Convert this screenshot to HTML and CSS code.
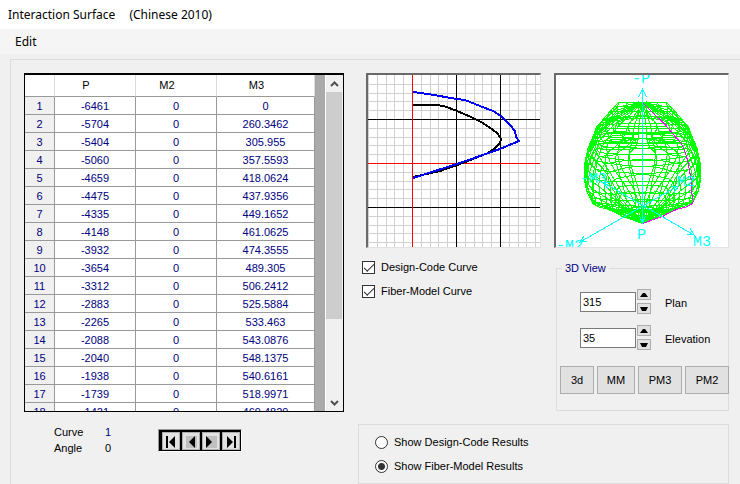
FILE: index.html
```html
<!DOCTYPE html>
<html lang="en">
<head>
<meta charset="utf-8">
<title>Interaction Surface (Chinese 2010)</title>
<link rel="stylesheet" href="styles.css">
</head>
<body>
<header class="titlebar"><span>Interaction Surface</span><span>(Chinese 2010)</span></header>
<nav class="menubar"><button type="button" class="menu-item">Edit</button></nav>
<main class="panel">
  <section class="left">
    <div class="sheet">
      <div class="sheet-view">
        <table class="points">
          <thead><tr><th class="num"></th><th class="axial">P</th><th class="axial">M2</th><th>M3</th></tr></thead>
          <tbody id="rows"></tbody>
        </table>
      </div>
      <div class="scrollbar">
        <button type="button" class="scroll-btn" aria-label="Scroll up"><svg width="9" height="6" viewBox="0 0 9 6"><path d="M1 5 4.500 1.500 8 5" fill="none" stroke="#505050" stroke-width="2"/></svg></button>
        <div class="track"><div class="thumb"></div></div>
        <button type="button" class="scroll-btn" aria-label="Scroll down"><svg width="9" height="6" viewBox="0 0 9 6"><path d="M1 1 4.500 4.500 8 1" fill="none" stroke="#505050" stroke-width="2"/></svg></button>
      </div>
    </div>
    <div class="curve-row">
      <dl class="curve-info"><dt>Curve</dt><dd>1</dd><dt>Angle</dt><dd>0</dd></dl>
      <div class="player">
        <button type="button" aria-label="First curve"><svg width="15" height="15" viewBox="0 0 15 15"><path d="M2 2h2v12H2zM11 2v12L5 8z"/></svg></button>
        <button type="button" aria-label="Previous curve"><svg width="15" height="15" viewBox="0 0 15 15"><path fill="#c0c0c0" d="M2 2h11v12H2z"/><path d="M11 2v12L5 8z"/></svg></button>
        <button type="button" aria-label="Next curve"><svg width="15" height="15" viewBox="0 0 15 15"><path fill="#c0c0c0" d="M2 2h11v12H2z"/><path d="M2 2v12L8 8z"/></svg></button>
        <button type="button" aria-label="Last curve"><svg width="15" height="15" viewBox="0 0 15 15"><path d="M10 2h2v12h-2zM3 2v12L9 8z"/></svg></button>
      </div>
    </div>
  </section>
  <section class="right">
    <div class="views">
      <div class="plot-col">
        <svg class="plot" viewBox="0 0 172 172" id="plot" role="img" aria-label="P-M curve"></svg>
        <div class="checks">
          <label><input type="checkbox" checked>Design-Code Curve</label>
          <label><input type="checkbox" checked>Fiber-Model Curve</label>
        </div>
      </div>
      <div class="view-col">
        <svg class="plot" viewBox="0 0 172 172" id="surface" role="img" aria-label="Interaction surface"></svg>
        <fieldset class="view3d">
          <legend>3D View</legend>
          <div class="angle">
            <input id="plan" type="text" value="315">
            <div class="spin">
              <button type="button" aria-label="Increase plan"><svg width="8" height="4" viewBox="0 0 8 4"><path d="M0 4 3 0h2l3 4z"/></svg></button>
              <button type="button" aria-label="Decrease plan"><svg width="8" height="4" viewBox="0 0 8 4"><path d="M0 0 2 4h4l2-4z"/></svg></button>
            </div>
            <label for="plan">Plan</label>
          </div>
          <div class="angle">
            <input id="elevation" type="text" value="35">
            <div class="spin">
              <button type="button" aria-label="Increase elevation"><svg width="8" height="4" viewBox="0 0 8 4"><path d="M0 4 3 0h2l3 4z"/></svg></button>
              <button type="button" aria-label="Decrease elevation"><svg width="8" height="4" viewBox="0 0 8 4"><path d="M0 0 2 4h4l2-4z"/></svg></button>
            </div>
            <label for="elevation">Elevation</label>
          </div>
          <div class="presets">
            <button type="button">3d</button><button type="button">MM</button><button type="button">PM3</button><button type="button">PM2</button>
          </div>
        </fieldset>
      </div>
    </div>
    <div class="results">
      <label><input type="radio" name="results">Show Design-Code Results</label>
      <label><input type="radio" name="results" checked>Show Fiber-Model Results</label>
    </div>
  </section>
</main>
<script src="surface.js"></script>
</body>
</html>
```
FILE: styles.css
```css
* { box-sizing: border-box; }
body {
  margin: 0;
  min-height: 100vh;
  display: flex;
  flex-direction: column;
  overflow: hidden;
  background: #f0f0f0;
  color: #000;
  font: 11px/16px "Liberation Sans", Arial, sans-serif;
}
button, input { font: inherit; color: inherit; margin: 0; }
button { padding: 0; border: 0; background: none; display: flex; align-items: center; justify-content: center; }
svg { display: block; }

.titlebar, .menu-item { font: 12px/24px "Noto Sans", "Open Sans", sans-serif; }
.titlebar { display: flex; gap: 14px; background: #fff; padding: 3px 8px 2px; }
.menubar { display: flex; background: #f5f5f5; padding: 1px 15px 0; }

.panel {
  flex: 1;
  display: flex;
  gap: 14px;
  margin: 5px 0 0 10px;
  padding: 13px 0 0 13px;
  border: solid #dcdcdc;
  border-width: 1px 0 0 1px;
}
.left { width: 320px; flex: none; }
.sheet { display: flex; height: 339px; border: 1px solid #000; border-top-width: 2px; }
.sheet-view { flex: 1; overflow: hidden; background: #aaa; }
.points { table-layout: fixed; width: 290px; border-collapse: separate; border-spacing: 0; text-align: center; color: navy; background: #fff; }
.points th, .points td { padding: 2px 0 0; border: solid #999; border-width: 0 1px 1px 0; height: 18px; line-height: 15px; font-weight: normal; }
.points thead th { height: 22px; padding: 0 18px 0 0; border-right-color: #dcdcdc; color: #000; }
.points .num { width: 30px; }
.points .axial { width: 81px; }
.points tbody .num { background: #f0f0f0; }
.scrollbar { width: 18px; display: flex; flex-direction: column; background: #f0f0f0; border-left: 1px solid #fff; }
.scroll-btn { height: 17px; }
.track { flex: 1; padding: 0 1px 0 0; }
.thumb { height: 75%; background: #cdcdcd; }

.curve-row { display: flex; align-items: flex-start; justify-content: space-between; margin-top: 12px; padding: 0 102px 0 30px; }
.curve-info { display: grid; grid-template-columns: 48px 12px; margin: 0; }
.curve-info dd { margin: 0; text-align: center; color: navy; }
.curve-info dd:last-child { color: #000; }
.player { display: flex; gap: 2px; margin-top: 5px; padding: 2px 1px 1px 3px; background: #000; border: 1px solid; border-color: #999 #fff #fff #999; }
.player button { width: 18px; height: 18px; background: #e1e1e1; border: 1px solid #adadad; }

.right { flex: 1; min-width: 0; }
.views { display: flex; gap: 13px; padding-left: 8px; }
.plot-col, .view-col { width: 175px; flex: none; }
.plot { width: 175px; height: 175px; background: #fff; border: solid; border-width: 2px 1px 1px 2px; border-color: #696969 #e3e3e3 #e3e3e3 #696969; }
.checks { margin: 11px 0 0 -4px; display: grid; gap: 8px; }
.checks label, .results label { display: flex; align-items: center; gap: 6px; }
input[type="checkbox"], input[type="radio"] { appearance: none; width: 13px; height: 13px; border: 1px solid #333; background: #fff; flex: none; }
input[type="checkbox"]::before { content: ""; display: block; width: 9px; height: 4px; margin: 2px 1px; border: solid #333; border-width: 0 0 1px 1px; transform: rotate(-45deg); }
input[type="radio"] { border-radius: 50%; }
input[type="radio"]:checked { background: radial-gradient(circle, #333 3px, #fff 4px); }

.view3d { margin: 12px 0 0 2px; padding: 4px 1px 16px 3px; border: 1px solid #dcdcdc; min-width: 0; }
.view3d legend { margin-left: 2px; padding: 0 3px; color: navy; }
.angle { display: flex; align-items: center; margin: 9px 0 11px 20px; }
.angle input { width: 56px; height: 20px; padding: 0 2px; border: 1px solid #7a7a7a; background: #fff; }
.angle label { flex: 1; padding: 2px 0 0 14px; }
.spin { display: grid; gap: 3px; margin-left: 1px; }
.spin button { width: 14px; height: 11px; background: #e1e1e1; border: 1px solid #adadad; }
.presets { display: grid; grid-template-columns: 34px 38px 44px 44px; gap: 3px; margin-top: 16px; }
.presets button { height: 28px; background: #e1e1e1; border: 1px solid #adadad; }

.results { display: grid; gap: 8px; margin: 13px 11px 0 0; padding: 9px 16px; border: 1px solid #dcdcdc; }
```
FILE: surface.js
```js
const points = [
  [-6461, 0], [-5704, 260.3462], [-5404, 305.955], [-5060, 357.5593], [-4659, 418.0624],
  [-4475, 437.9356], [-4335, 449.1652], [-4148, 461.0625], [-3932, 474.3555], [-3654, 489.305],
  [-3312, 506.2412], [-2883, 525.5884], [-2265, 533.463], [-2088, 543.0876], [-2040, 548.1375],
  [-1938, 540.6161], [-1739, 518.9971], [-1421, 469.4829]
];
document.getElementById("rows").innerHTML = points.map(([p, m], i) =>
  `<tr><th class="num">${i + 1}</th><td>${p}</td><td>0</td><td>${m}</td></tr>`).join("");

// P-M plot: grid lines, axes and both curves
const line = (d, color, width = 1) =>
  `<path d="${d}" fill="none" stroke="${color}" stroke-width="${width}" shape-rendering="crispEdges"/>`;
let minor = "", major = "";
for (let i = -9; i < 20; i++) {
  const s = Math.round(i * 8.8) + 0.5;
  const x = s + 44, y = s + 88;
  minor += `M${x} 0V172M0 ${y}H172`;
  if (i % 5 === 0 && i !== 0) major += (i > 0 ? `M${x} 0V172` : "") + `M0 ${y}H172`;
}
document.getElementById("plot").innerHTML =
  line(minor, "#d0d0d0") + line(major, "#000") + line("M44.5 0V172M0 88.500H172", "#f00") +
  line("M45 30H69L77 31.500 89 36 102 41.500 113 47 124 54 130 59 133 64 132 68 127 73 120 78 105 84 92 89 72 96 45 102", "#000", 2) +
  line("M45 17 60 19 89 24 97 25 112 31 125 36 133 41 142 50 147 56 148 62 151 66 132 74 109 82 89 89 70 95 45 103", "#00f", 2);

// Interaction surface: one profile swept round the P axis
const profile = points.concat([
  [-1150, 410], [-850, 355], [-550, 305], [-250, 255], [0, 222], [300, 165], [600, 110], [900, 55], [1200, 0]
]);
const tilt = i => i < 4 ? 0.95 - i * 0.1 : i < 10 ? 0.55 : Math.min(1, 0.55 + (i - 9) * 0.09);
const project = (p, m, angle, i) => {
  const c = Math.cos(angle), s = Math.sin(angle);
  const e = Math.min(1.25, 1.02 + i * 0.04);
  const r = m / Math.pow(Math.abs(c) ** e + Math.abs(s) ** e, 1 / e);
  const m3 = r * c, m2 = r * s;
  return [86.5 + (m3 + m2) * 0.0925, 129.5 + p * 0.0158 + (m3 - m2) * 0.0536 * tilt(i)];
};
const path = pts => "M" + pts.map(q => q.map(v => v.toFixed(1)).join(" ")).join("L");
const steps = 32, angleAt = k => k * 2 * Math.PI / steps;
const twist = (a, i) => a + 0.12 * Math.sin(4 * a) * Math.sin(i * 0.6);
let mesh = "";
for (let k = 0; k < steps; k++) {
  const a = angleAt(k);
  mesh += path(profile.map(([p, m], i) => project(p, m, twist(a, i), i)));
}
profile.forEach(([p, m], i) => {
  const sway = i > 3 && i < 24 ? 200 : 0;
  mesh += path(Array.from({ length: steps + 1 }, (_, k) => {
    const a = angleAt(k);
    return project(p + sway * Math.sin(2 * a) ** 2 * Math.sin(i * 0.9), m, twist(a, i), i);
  }));
});
const label = (x, y, t) => `<text x="${x}" y="${y}" fill="#0ff">${t}</text>`;
document.getElementById("surface").innerHTML =
  line(mesh, "#0f0") + line(path(profile.map(([p, m], i) => project(p, m, 0, i))), "#f0f") +
  line("M86.5 14V148M82.500 22 86.500 14 90.500 22M83.500 141 86.500 148 89.500 141" +
    "M48 108 138 160M131 159 138 160 134 153M54 107 48 108 52 114" +
    "M24 167 122 111M28 161 24 167 31 166M115 112 122 111 118 118", "#0ff") +
  `<g font-family="Liberation Mono" font-size="15">` +
  label(76, 8, "-P") + label(81, 164, "P") + label(24, 108, "-M3") + label(121, 111, "M2") +
  label(137, 171, "M3") + label(0, 175, "-M2") + `</g>`;
```
